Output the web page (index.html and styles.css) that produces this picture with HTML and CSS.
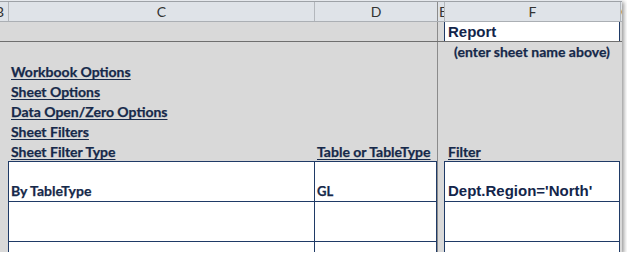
FILE: index.html
```html
<!DOCTYPE html>
<html>
<head>
<meta charset="utf-8">
<link rel="stylesheet" href="styles.css">
</head>
<body>
<div class="sheet">
  <div class="row hdr">
    <div class="hc hb"><span>B</span></div>
    <div class="hc sep">C</div>
    <div class="hc sep">D</div>
    <div class="hc frz">E</div>
    <div class="hc sep">F</div>
    <div class="hc sep hg"><span>G</span></div>
  </div>
  <div class="row r2">
    <div></div><div></div><div></div><div class="frz"></div>
    <div class="report">Report</div><div></div>
  </div>
  <div class="row gr">
    <div></div><div></div><div></div><div class="frz"></div>
    <div class="note">(enter sheet name above)</div><div></div>
  </div>
  <div class="row gr">
    <div></div><div class="lnk"><span>Workbook Options</span></div><div></div><div class="frz"></div><div></div><div></div>
  </div>
  <div class="row gr">
    <div></div><div class="lnk"><span>Sheet Options</span></div><div></div><div class="frz"></div><div></div><div></div>
  </div>
  <div class="row gr">
    <div></div><div class="lnk"><span>Data Open/Zero Options</span></div><div></div><div class="frz"></div><div></div><div></div>
  </div>
  <div class="row gr">
    <div></div><div class="lnk"><span>Sheet Filters</span></div><div></div><div class="frz"></div><div></div><div></div>
  </div>
  <div class="row gr r8">
    <div></div><div class="lnk"><span>Sheet Filter Type</span></div><div class="lnk"><span>Table or TableType</span></div><div class="frz"></div><div class="lnk lf"><span>Filter</span></div><div></div>
  </div>
  <div class="row tr">
    <div></div><div class="cell cc">By TableType</div><div class="cell cd">GL</div><div class="frz"></div><div class="cell cf expr">Dept.Region='North'</div><div></div>
  </div>
  <div class="row tr">
    <div></div><div class="cell cc"></div><div class="cell cd"></div><div class="frz"></div><div class="cell cf"></div><div></div>
  </div>
  <div class="row tr last">
    <div></div><div class="cell cc"></div><div class="cell cd"></div><div class="frz"></div><div class="cell cf"></div><div></div>
  </div>
</div>
</body>
</html>
```
FILE: styles.css
```css
html, body {
  margin: 0;
  padding: 0;
  background: #ffffff;
}

.sheet {
  width: 622px;
  height: 252px;
  box-sizing: border-box;
  padding-top: 1px;
  background: #d9d9d9;
  box-shadow: 2px 2px 4px rgba(0, 0, 0, 0.4);
  overflow: hidden;
  font-family: Lato, "Liberation Sans", sans-serif;
  color: #16294a;
}

.row {
  display: grid;
  grid-template-columns: 8px 306px 123px 7px 176px 2px;
  box-sizing: border-box;
}

.row > div {
  box-sizing: border-box;
  min-width: 0;
}

/* column header */
.hdr {
  height: 21px;
  background: #dfe3e8;
  border-top: 1px solid #9ea2a7;
  border-bottom: 1px solid #abafb4;
  box-shadow: 0 -1px 0 #e6e9ed;
}

.hc {
  display: flex;
  align-items: center;
  justify-content: center;
  font-family: Lato, "Liberation Sans", sans-serif;
  font-size: 14px;
  color: #333333;
  overflow: hidden;
  line-height: 19px;
}

.hc.sep {
  border-left: 1px solid #b3b7bc;
}

.hb {
  justify-content: flex-end;
  padding-right: 4px;
}

.hg {
  justify-content: flex-start;
  padding-left: 0;
}

.frz {
  border-left: 1px solid #8b8b8b;
}

.hc.frz {
  justify-content: flex-start;
  padding-left: 1px;
}

/* row 2 */
.r2 {
  height: 20px;
  border-bottom: 1px solid #6f6f6f;
}

.report {
  background: #ffffff;
  border-left: 1px solid #1f3a66;
  border-right: 1px solid #1f3a66;
  font-family: "Liberation Sans", Arial, sans-serif;
  font-weight: 700;
  font-size: 15px;
  line-height: 17px;
  padding: 1px 0 0 3px;
  color: #13254a;
}

/* gray rows */
.gr {
  height: 20px;
}

.r8 {
  height: 19px;
}

.note {
  display: flex;
  align-items: flex-end;
  justify-content: center;
  font-weight: 700;
  font-size: 14px;
  line-height: 16px;
  padding-bottom: 2px;
  -webkit-text-stroke: 0.25px #16294a;
}

.lnk {
  display: flex;
  align-items: flex-end;
  padding: 0 0 2px 3px;
  font-weight: 700;
  font-size: 14px;
  line-height: 16px;
  white-space: nowrap;
  -webkit-text-stroke: 0.25px #16294a;
}

.r8 .lnk {
  padding-bottom: 1px;
}

.lnk span {
  text-decoration: underline;
  text-decoration-thickness: 1px;
  text-underline-offset: 2px;
}

.lf {
  padding-left: 4px;
}

/* table rows */
.tr {
  height: 40px;
}

.tr.last {
  height: 11px;
}

.cell {
  background: #ffffff;
  border-top: 1px solid #1f3a66;
  display: flex;
  align-items: flex-end;
  font-weight: 700;
  font-size: 14px;
  line-height: 16px;
  padding: 0 0 2px 2px;
  white-space: nowrap;
  -webkit-text-stroke: 0.25px #16294a;
}

.cc {
  border-left: 1px solid #1f3a66;
}

.cd {
  border-left: 1px solid #1f3a66;
  border-right: 1px solid #1f3a66;
  font-size: 13px;
}

.cf {
  border-left: 1px solid #1f3a66;
  border-right: 1px solid #1f3a66;
}

.expr {
  font-family: "Liberation Sans", Arial, sans-serif;
  font-size: 15px;
  line-height: 17px;
  padding-bottom: 2px;
  padding-left: 3px;
  color: #13254a;
  -webkit-text-stroke: 0;
}
```
